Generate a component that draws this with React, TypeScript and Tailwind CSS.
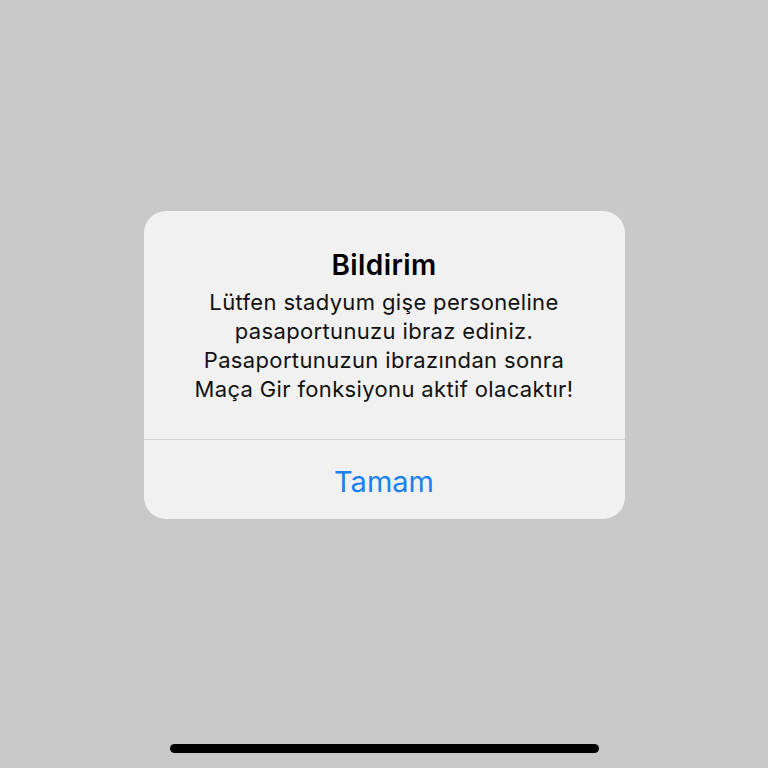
export default function App() {
  return (
    <div
      className="flex h-[768px] w-full flex-col items-center bg-[#c9c9c9]"
      style={{ fontFamily: 'Inter, "Noto Sans", sans-serif' }}
    >
      <div className="mt-[211px] flex w-[481px] flex-col overflow-hidden rounded-[22px] bg-[#f1f1f1]">
        <div className="flex flex-col items-center px-6 pb-[35px] pt-[37px] text-center text-black">
          <h1 className="text-[28px] font-semibold leading-[34px] tracking-[0.4px]">Bildirim</h1>
          <p className="mt-[6px] text-[22px] leading-[29px] tracking-[0.35px] text-[#111]">
            Lütfen stadyum gişe personeline
            <br />
            pasaportunuzu ibraz ediniz.
            <br />
            Pasaportunuzun ibrazından sonra
            <br />
            Maça Gir fonksiyonu aktif olacaktır!
          </p>
        </div>
        <div className="h-px bg-[#d3d3d3]" />
        <button className="flex h-[79px] items-center justify-center pt-[5px] text-[29px] text-[#1a80ef]">
          Tamam
        </button>
      </div>
      <div className="mt-auto mb-[15px] h-[9px] w-[429px] rounded-full bg-black" />
    </div>
  )
}
